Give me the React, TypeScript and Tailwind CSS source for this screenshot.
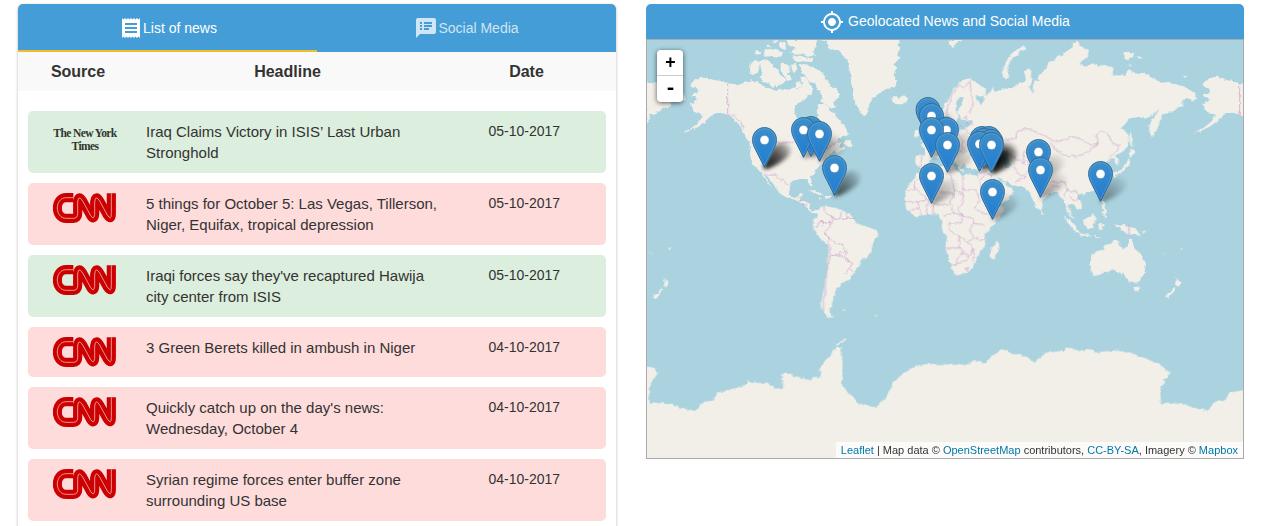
import { MdMyLocation, MdReceipt, MdSpeakerNotes } from "react-icons/md";

type Source = "nyt" | "cnn";
type News = { source: Source; lines: string[]; date: string; good: boolean };

const news: News[] = [
  { source: "nyt", lines: ["Iraq Claims Victory in ISIS’ Last Urban", "Stronghold"], date: "05-10-2017", good: true },
  { source: "cnn", lines: ["5 things for October 5: Las Vegas, Tillerson,", "Niger, Equifax, tropical depression"], date: "05-10-2017", good: false },
  { source: "cnn", lines: ["Iraqi forces say they've recaptured Hawija", "city center from ISIS"], date: "05-10-2017", good: true },
  { source: "cnn", lines: ["3 Green Berets killed in ambush in Niger"], date: "04-10-2017", good: false },
  { source: "cnn", lines: ["Quickly catch up on the day's news:", "Wednesday, October 4"], date: "04-10-2017", good: false },
  { source: "cnn", lines: ["Syrian regime forces enter buffer zone", "surrounding US base"], date: "04-10-2017", good: false },
];

// Marker tips in map pixels, listed from back to front; several stories can share a place.
const pins: { x: number; y: number; stories: number }[] = [
  { x: 281, y: 98, stories: 1 },
  { x: 284.5, y: 104, stories: 1 },
  { x: 299.5, y: 118, stories: 1 },
  { x: 284.5, y: 118, stories: 1 },
  { x: 164, y: 117, stories: 1 },
  { x: 156.5, y: 118, stories: 1 },
  { x: 172.5, y: 122, stories: 1 },
  { x: 117.5, y: 128, stories: 4 },
  { x: 335, y: 127, stories: 1 },
  { x: 342, y: 127, stories: 2 },
  { x: 337, y: 129, stories: 1 },
  { x: 344, y: 130, stories: 2 },
  { x: 332.5, y: 132, stories: 1 },
  { x: 344.5, y: 133, stories: 3 },
  { x: 300.5, y: 133, stories: 1 },
  { x: 391.5, y: 140, stories: 1 },
  { x: 187.5, y: 156, stories: 2 },
  { x: 393.5, y: 158, stories: 1 },
  { x: 453.5, y: 162, stories: 1 },
  { x: 284.5, y: 164, stories: 1 },
  { x: 345.5, y: 180, stories: 1 },
];

function CnnLogo() {
  const d =
    "M61 14H40C4 14 4 76 40 76H61Q74 76 74 62V27Q76 4 89 24L112 66Q123 84 125 64V27Q128 4 140 24L163 66Q175 84 175 62V1";
  return (
    <svg viewBox="0 0 189 90" className="mt-[10px] h-[30px] w-[63px]" fill="none" aria-label="CNN">
      <path d={d} stroke="#cc0000" strokeWidth="27.5" />
      <path d={d} stroke="#f6b9b9" strokeWidth="2.4" />
    </svg>
  );
}

function NytLogo() {
  return (
    <div className="mt-[16px] w-[64px] text-center font-['Liberation_Serif',serif] text-[11.5px] leading-[13px] font-bold tracking-[-0.6px] whitespace-nowrap text-[#30352f]">
      The New York
      <br />
      Times
    </div>
  );
}

function World() {
  return (
    <g>
      {/* North and Central America */}
      <path d="M140 245L150 238 165 232 175 230 190 236 205 240 225 243 245 250 262 252 275 256 285 252 300 246 310 243 320 240 325 247 335 243 345 252 360 262 375 266 388 272 402 266 415 270 430 268 445 262 455 268 466 262 468 250 463 235 475 228 485 238 490 252 498 262 498 275 485 280 484 292 470 304 455 310 446 325 442 340 450 352 470 358 490 366 502 378 510 368 515 350 512 330 520 312 535 312 548 320 555 335 565 340 572 352 585 365 600 385 607 405 590 412 572 423 585 428 582 443 600 440 590 452 575 458 565 450 555 462 548 470 540 480 530 490 520 497 515 505 505 515 495 530 497 545 500 557 495 560 487 550 482 538 465 536 450 540 435 545 430 555 428 570 432 585 440 592 452 592 458 580 470 578 468 592 460 600 475 602 488 606 492 615 490 625 498 632 512 633 521 629 520 638 505 640 492 634 482 622 470 612 455 602 440 598 420 592 400 580 392 565 380 550 365 530 352 520 360 535 370 550 378 562 368 552 355 535 345 518 335 508 322 495 315 480 312 460 315 440 305 420 295 405 288 390 280 375 265 358 250 348 240 342 225 338 210 340 195 345 190 356 175 366 155 380 130 392 108 402 145 378 162 362 170 350 165 342 150 340 140 325 135 312 145 305 155 300 148 292 135 290 142 282 155 278 155 268 142 262 133 255Z" />
      {/* Caribbean and Newfoundland */}
      <path d="M485 570L505 570 522 580 535 586 520 585 500 576ZM535 588L552 588 562 592 545 595ZM572 591L582 592 577 595ZM518 594L526 596 520 597ZM600 420L612 422 621 440 612 442 600 437 593 430Z" />
      {/* Arctic archipelago, Greenland and Iceland */}
      <g transform="translate(282 108)">
        <path d="M60 75L80 70 95 80 100 95 115 100 118 115 138 133 125 145 110 150 95 152 85 142 70 138 55 125 70 115 60 100 62 85ZM32 80L50 72 65 80 55 95 50 110 38 118 30 105ZM180 85L200 85 215 95 235 100 250 115 265 135 275 150 290 160 300 175 290 190 280 200 292 212 275 218 255 205 240 195 250 190 245 175 235 160 225 142 210 140 200 125 190 110 180 100ZM140 12H235L228 32 218 46 226 56 205 62 185 54 165 56 152 46 170 38 145 28ZM155 58L175 62 200 64 222 70 215 78 185 76 160 74ZM122 80L140 82 152 92 148 110 135 116 122 106ZM155 86L168 84 172 98 162 112 155 102ZM130 112L150 118 155 132 140 134ZM70 45L90 38 112 44 130 48 122 62 95 60 75 62ZM50 42L68 48 55 60 44 54ZM95 14L112 12 106 22ZM118 18L135 22 138 42 125 38ZM80 24L95 30 82 34ZM194 160L208 154 218 168 214 178 202 174ZM168 140L180 135 186 148 178 158 166 155ZM240 12L265 18 262 34 275 42 290 42 308 55 322 72 328 100 335 120 332 140 340 155 338 175 345 200 355 222 365 235 378 238 385 225 385 210 400 185 420 170 440 160 465 150 472 135 462 115 468 95 462 80 482 68 470 55 480 40 475 25 485 0H240ZM455 188L465 180 475 188 490 180 503 185 505 195 490 205 470 205 458 198Z" />
      </g>
      {/* South America */}
      <g transform="translate(462 495)">
        <path d="M58 130L72 122 90 125 125 135 155 152 170 175 200 185 228 195 235 206 230 218 218 235 215 260 200 275 185 285 175 305 160 325 145 345 130 352 118 355 120 365 108 372 108 388 100 400 95 420 88 435 90 448 104 458 82 457 68 435 63 412 70 380 76 345 82 300 86 255 80 240 60 220 45 195 38 180 42 165 52 150ZM122 432L136 430 132 435ZM222 450L232 452 228 455Z" />
      </g>
      {/* Eurasia */}
      <g transform="translate(600 0)">
        <path d="M290 345L295 315 310 295 322 270 335 255 350 240 372 235 385 245 405 255 420 268 418 284 405 290 385 284 392 300 405 312 415 302 412 288 425 282 435 272 440 262 450 275 465 270 480 262 490 265 505 258 520 250 530 252 540 240 535 215 545 205 555 215 555 240 550 260 562 282 560 260 566 240 580 245 578 228 590 222 600 205 610 185 625 178 645 165 660 155 675 145 680 130 695 125 705 140 730 150 725 172 700 190 720 200 740 190 755 198 790 195 800 210 802 228 815 225 835 228 842 212 855 212 875 222 895 218 910 230 930 238 945 248 975 245 995 255 1010 258 1030 268 1050 285 1055 295 1040 303 1025 293 1008 302 1012 320 995 322 975 335 950 345 942 362 935 385 925 405 917 412 910 395 910 375 920 355 935 335 945 325 930 335 918 348 900 355 875 352 850 355 840 370 822 388 840 392 850 410 845 435 830 455 818 462 810 468 820 485 817 497 808 490 803 474 793 478 780 490 765 488 783 500 790 520 785 545 770 562 745 572 730 575 715 580 700 582 692 590 705 605 708 620 695 630 685 618 675 612 668 615 672 640 684 658 670 648 662 625 655 605 645 595 635 580 620 575 605 588 590 600 590 612 587 630 580 635 570 620 560 600 553 580 545 570 525 560 500 556 480 545 478 555 498 568 500 578 490 595 470 610 445 622 440 615 425 590 410 565 398 540 395 520 398 512 380 510 360 502 352 490 345 505 355 515 342 512 330 490 318 478 300 468 305 482 320 500 315 512 305 495 290 478 262 472 250 482 248 495 235 502 215 500 207 485 210 465 235 465 240 450 225 435 250 425 265 410 285 398 290 380 295 365 305 380 315 392 340 392 365 382 380 362 350 360 338 350 325 375 314 368 310 350Z" />
        <path d="M218 425L235 418 238 402 228 388 222 370 232 355 242 372 255 400 258 415 240 424ZM203 395L218 390 217 408 204 412ZM470 230L472 205 480 185 495 162 515 148 535 138 540 146 520 158 502 172 490 190 482 210 492 230 484 236ZM305 126L318 120H350L330 130 318 144ZM832 160L848 155 864 160 860 174 838 178ZM872 168L890 172 880 178ZM850 190L858 196 850 200ZM1010 228L1024 228 1018 234ZM852 392L860 415 858 440 850 425ZM858 445L868 460 852 470 848 460ZM850 470L852 490 840 508 820 520 808 525 802 518 825 510 842 488ZM800 522L812 526 804 536ZM585 632L594 640 586 644ZM708 580L720 580 714 590ZM766 604L778 608 775 625 785 640 775 636 768 622ZM772 640L784 650 778 655Z" />
        <path fill="#aad3df" d="M338 350L345 355 336 335 350 305 352 292 342 290 330 310 332 332ZM370 462L400 452 430 466 450 478 420 486 385 484ZM470 455L482 450 485 470 492 500 478 502 470 480ZM452 530L468 540 480 545 470 548 455 540Z" />
      </g>
      {/* South-east Asia and Oceania */}
      <g transform="translate(927 465)">
        <path d="M325 180L345 195 365 215 375 235 362 230 342 208ZM372 235L395 238 410 244 378 242ZM385 195L400 188 415 178 425 188 420 205 412 220 395 218 386 208ZM430 205L450 205 440 212 446 228 436 222 432 232ZM480 208L495 212 510 210 530 218 545 225 558 245 540 236 520 240 505 228 485 216ZM445 165L458 172 452 180 440 174ZM415 241L435 246 428 249ZM560 230L574 226 568 234ZM345 166L352 178 347 172Z" />
      </g>
      <g transform="translate(1200 690)">
        <path d="M133 75L150 65 170 60 178 45 195 40 208 30 222 33 218 48 235 58 245 50 250 26 258 30 265 55 285 75 300 100 295 130 280 155 255 158 240 145 232 130 225 135 205 120 180 125 160 135 145 138 137 125 132 100ZM262 170L280 170 275 186 266 184ZM386 138L394 150 408 155 398 170 390 166 392 154ZM386 170L390 178 374 195 366 206 356 202 372 186ZM345 65L358 74 352 72ZM402 55L412 50 408 58Z" />
      </g>
      {/* Africa */}
      <g transform="translate(600 0)">
        <path d="M225 512L240 502 260 503 300 495 325 498 330 515 350 525 370 520 395 528 400 545 412 580 425 600 440 622 460 622 475 622 470 640 450 662 430 690 415 700 418 735 400 760 385 785 380 805 360 820 327 827 318 805 305 770 298 740 303 710 287 685 289 662 277 645 247 643 207 649 180 622 174 595 182 565 200 540 213 520ZM458 720L460 735 448 775 438 781 431 768 438 742Z" />
      </g>
    </g>
  );
}

function Borders() {
  return (
    <g fill="none" stroke="#c793c4" strokeWidth="2.2" strokeOpacity=".8">
      <path d="M245 250V344L255 350 262 345 272 355 285 370 292 385M315 427H455L490 440 520 450 555 440 575 420M352 520L370 525 390 525 402 540 415 538 428 555M452 598L460 590 468 600M470 615L485 612" />
      <g transform="translate(462 495)">
        <path d="M72 125L78 145 98 155 97 170 88 172 90 185 72 205 85 220 88 240 90 270 82 310 78 345 75 380 70 410 72 440M98 155L105 165 120 160 125 140M125 160H165M140 145L142 162M88 172L60 170 48 190M72 205L85 218 110 235 130 240 138 262 120 260 118 270 92 272M138 262L135 275 155 295 150 310 135 325M118 270L152 292M150 310L158 320M52 175L75 170 65 185" />
      </g>
      <g transform="translate(600 0)">
        <path d="M300 360L305 320 320 280 340 255 355 265 375 240M372 245L375 275 382 310 370 340M350 355L360 350 365 370 380 375M340 375L360 390 375 400M335 400L352 420 345 440 362 455M340 450L355 460M300 400L310 430 325 440 330 460M250 425L275 445 300 450M210 465L228 470 222 500M470 420L510 415 512 395 545 385 575 400 600 408 625 425 655 420 680 410 710 420 735 435 760 430 735 445 720 460 690 470 655 465 625 445 612 425M760 432L750 405 765 395 785 400 800 430 820 435 810 455 790 475 780 488M480 460L510 475 535 490 530 460 560 450 600 440M505 500L515 520 540 530 510 545M540 480L555 500 540 525M395 520L420 515 440 530M400 540L425 520 445 540M615 545H655L665 570 650 590M620 555L640 560M660 570L690 575 700 600 680 600 670 585" />
        <path d="M180 570H205V545L225 530 250 560 290 580 320 580 325 595M225 530L228 515M205 560L235 590 250 610M175 605L215 605 220 625 195 630M215 605L250 600 275 615 310 615 320 590 325 570M308 500L315 530 325 570 350 585M350 525V570H392M350 570V610L335 625 345 645 365 650M392 572L400 600 385 625 410 640M315 615L325 640 290 645M325 640L350 650 345 670 310 672M345 645L380 655 385 670 370 690 385 712M310 672L308 690 340 708 342 745M300 744H345L355 755 340 765 332 780V795H318M340 710L365 725 385 712 400 720H418M365 725L380 745 375 765 355 785 335 790M380 745L385 765 378 785M385 670L415 675M410 640L445 645M225 625V645M242 610V645M262 610L260 645M345 755L370 768M360 805L368 800 364 812Z" />
      </g>
      <path d="M1448 675V706" />
    </g>
  );
}

function Pin({ x, y }: { x: number; y: number }) {
  return (
    <g transform={`translate(${x - 12.5} ${y - 41})`}>
      <path
        d="M.6 12.5C.6 5.9 5.9.6 12.5.6S24.4 5.9 24.4 12.5C24.4 16 23.4 18.8 21.7 22.2L12.5 40.4 3.3 22.2C1.6 18.8.6 16 .6 12.5Z"
        fill="url(#pinFill)"
        stroke="#2e6c97"
        strokeWidth="1"
      />
      <path
        d="M1.7 12.5C1.7 6.5 6.5 1.7 12.5 1.7S23.3 6.5 23.3 12.5C23.3 16 22.3 18.5 20.8 21.7L12.5 38 4.2 21.7C2.7 18.5 1.7 16 1.7 12.5Z"
        fill="none"
        stroke="#fff"
        strokeOpacity=".14"
      />
      <circle cx="12.5" cy="13" r="4.5" fill="#fff" stroke="#2e6c97" strokeOpacity=".5" strokeWidth=".6" />
    </g>
  );
}

function WorldMap() {
  return (
    <svg viewBox="0 0 596 418" className="block h-full w-full bg-[#aad3df]">
      <defs>
        <linearGradient id="pinFill" x1="0" y1="0" x2="0" y2="1">
          <stop offset="0" stopColor="#3d8ec9" />
          <stop offset=".75" stopColor="#2781d0" />
          <stop offset="1" stopColor="#2476c0" />
        </linearGradient>
        <linearGradient id="shade" gradientUnits="userSpaceOnUse" x1="0" y1="0" x2="25" y2="-20">
          <stop offset="0" stopOpacity=".75" />
          <stop offset="1" stopOpacity=".08" />
        </linearGradient>
        <filter id="soft" x="-30%" y="-30%" width="160%" height="160%">
          <feGaussianBlur stdDeviation="2" />
        </filter>
        <filter
          id="coast"
          filterUnits="userSpaceOnUse"
          x="-20"
          y="-20"
          width="640"
          height="460"
          colorInterpolationFilters="sRGB"
        >
          <feTurbulence type="fractalNoise" baseFrequency=".22" numOctaves="2" seed="4" result="n" />
          <feDisplacementMap in="SourceGraphic" in2="n" scale="4" xChannelSelector="R" yChannelSelector="G" />
        </filter>
      </defs>
      <g filter="url(#coast)">
        <g transform="translate(-1 -40) scale(.33333)">
          {[-1536, 0, 1536].map((dx) => (
            <g key={dx} transform={`translate(${dx} 0)`} fill="#f2efe9">
              <World />
              <Borders />
            </g>
          ))}
          <path
            transform="translate(0 690)"
            fill="#f2efe9"
            d="M-20 408L20 412 37 428 20 450 8 480 12 525 22 517 70 522 100 532 148 543 172 515 200 512 215 488 250 480 300 463 305 450 315 458 365 460 385 475 412 475 408 432 435 430 440 438 480 445 495 452 505 440 528 442 520 420 530 400 540 392 555 375 560 360 575 350 585 350 590 400 588 470 600 480 620 500 640 522 690 532 720 502 740 460 760 440 800 412 845 402 960 404 990 390 1012 400 1040 378 1070 357 1100 372 1140 378 1165 398 1200 368 1255 362 1260 352 1310 365 1325 357 1350 367 1420 360 1460 370 1500 385 1540 405 1573 428 1555 450 1543 480 1545 525 1560 518 1610 522 1640 532 1685 543 1708 515 1735 512 1750 488 1820 475V720H-20Z"
          />
          <path transform="translate(0 690)" d="M572 345L600 328" stroke="#f2efe9" strokeWidth="4" />
        </g>
      </g>
      {pins.flatMap(({ x, y, stories }) =>
        Array.from({ length: stories }, (_, i) => (
          <g key={`s${x}-${y}-${i}`} transform={`translate(${x} ${y})`} filter="url(#soft)">
            <path d="M-1 0L8 -19C13 -27 26 -27 26 -18 26 -12 17 -7 12 -4L3 0Z" fill="url(#shade)" opacity=".6" />
          </g>
        )),
      )}
      {pins.map(({ x, y }) => (
        <Pin key={`p${x}-${y}`} x={x} y={y} />
      ))}
    </svg>
  );
}

function NewsRow({ item }: { item: News }) {
  return (
    <div
      className={`flex shrink-0 rounded-[5px] ${item.good ? "bg-[#dceedd]" : "bg-[#fedcdc]"} ${
        item.lines.length > 1 ? "h-[62px]" : "h-[50px]"
      }`}
    >
      <div className="w-[118px] shrink-0 pl-[25px]">{item.source === "cnn" ? <CnnLogo /> : <NytLogo />}</div>
      <div className="w-[342.5px] shrink-0 pt-[10px] text-[15px] leading-[21px] whitespace-nowrap">
        {item.lines.map((line) => (
          <div key={line}>{line}</div>
        ))}
      </div>
      <div className="pt-[10px] text-[14px] leading-5">{item.date}</div>
    </div>
  );
}

export default function App() {
  return (
    <div className="flex h-[526px] items-start overflow-hidden bg-white pt-1 pl-[18px] font-['Liberation_Sans',Arial,sans-serif] text-[#333]">
      <section className="h-[560px] w-[598px] shrink-0 rounded-t-[5px] bg-white shadow-[0_1px_3px_rgba(0,0,0,0.3)]">
        <div className="flex h-12 rounded-t-[5px] bg-[#449dd6] text-[14px] text-white">
          <div className="flex w-[299px] items-center justify-center border-b-2 border-[#f2bd2c] pt-[2px] pl-[1px]">
            <MdReceipt className="size-6" />
            <span>List of news</span>
          </div>
          <div className="flex w-[299px] items-center justify-center text-white/75">
            <MdSpeakerNotes className="size-6" />
            <span>Social Media</span>
          </div>
        </div>
        <div className="flex h-[39px] items-center bg-[#f9f9f9] text-center text-[16px] font-bold">
          <div className="w-[120px]">Source</div>
          <div className="w-[299px]">Headline</div>
          <div className="w-[179px]">Date</div>
        </div>
        <div className="flex flex-col gap-[10px] px-[10px] pt-5">
          {news.map((item) => (
            <NewsRow key={item.lines[0]} item={item} />
          ))}
        </div>
      </section>

      <section className="ml-[30px] w-[598px] shrink-0">
        <div className="flex h-[35px] items-center justify-center gap-1 rounded-t-[5px] bg-[#449dd6] text-[14px] text-white">
          <MdMyLocation className="size-6" />
          <span>Geolocated News and Social Media</span>
        </div>
        <div className="relative h-[420px] border border-[#aaa]">
          <WorldMap />
          <div className="absolute top-[10px] left-[10px] w-[26px] rounded-[4px] bg-white text-center font-['Liberation_Mono',monospace] text-[18px] font-bold text-black shadow-[0_1px_5px_rgba(0,0,0,0.65)]">
            <div className="h-[26px] border-b border-[#ccc] pl-px leading-[26px]">+</div>
            <div className="h-[26px] pl-px text-[20px] leading-[26px]">-</div>
          </div>
          <div className="absolute right-0 bottom-0 bg-white/75 px-[5px] text-[11px] leading-4 whitespace-nowrap">
            <span className="text-[#0078a8]">Leaflet</span> | Map data © <span className="text-[#0078a8]">OpenStreetMap</span>{" "}
            contributors, <span className="text-[#0078a8]">CC-BY-SA</span>, Imagery ©{" "}
            <span className="text-[#0078a8]">Mapbox</span>
          </div>
        </div>
      </section>
    </div>
  );
}
